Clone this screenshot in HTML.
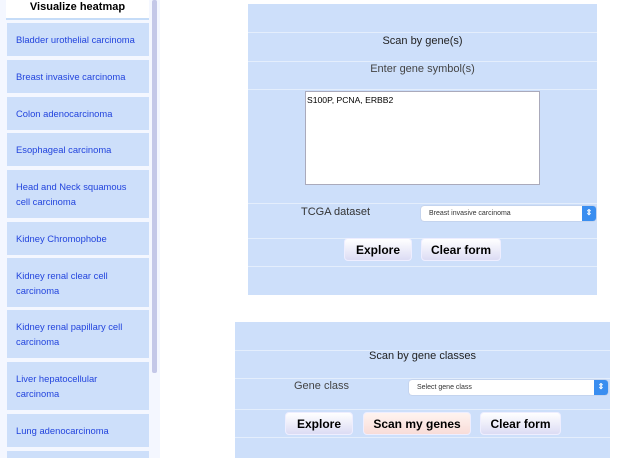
<!DOCTYPE html>
<html><head><style>
*{box-sizing:border-box;margin:0;padding:0}
html,body{width:620px;height:458px;overflow:hidden}
body{background:#fff;font-family:"Liberation Sans",Arial,sans-serif;position:relative}
.side{position:absolute;left:0;top:0;width:160px;height:458px;background:#f4f7ff;overflow:hidden}
.hd{position:absolute;left:6px;top:0;width:143px;height:20px;background:#fff;font-weight:bold;font-size:11px;text-align:center;line-height:15px;border-bottom:2px solid #c5dcf8}
.it{position:absolute;left:7px;width:142px;background:#cddffa;color:#2244dd;font-size:9.4px;line-height:15px;padding-left:9px;display:flex;align-items:center}
.sb{position:absolute;left:152px;top:0;width:5px;height:373px;background:#c4c8e8;border-radius:2px}
.p{position:absolute;background:#cddffa;overflow:hidden}
.r{position:absolute;left:0;right:0;border-top:1px solid #e4eefc}
.t{position:absolute;left:0;right:0;text-align:center;font-size:11px;color:#222}
.btn{position:absolute;height:23px;border-radius:4px;font-weight:bold;font-size:12px;text-align:center;line-height:22px;background:linear-gradient(#fff,#dcdcf4);border:1px solid #eef;color:#000}
.sel{position:absolute;height:15px;background:#fff;border-radius:3px;font-size:7px;line-height:15px;padding-left:8px;color:#333;box-shadow:0 0 1px #99a}
.sel b{position:absolute;right:0;top:0;width:14px;height:15px;background:#3a8ef0;border-radius:0 3px 3px 0;color:#fff;font-size:8px;text-align:center;line-height:14px}
</style></head><body>
<div class="side">
<div class="hd">Visualize heatmap</div>
<div class="it" style="top:23px;height:33px">Bladder urothelial carcinoma</div>
<div class="it" style="top:60px;height:33px">Breast invasive carcinoma</div>
<div class="it" style="top:97px;height:33px">Colon adenocarcinoma</div>
<div class="it" style="top:133px;height:33px">Esophageal carcinoma</div>
<div class="it" style="top:170px;height:48px">Head and Neck squamous<br>cell carcinoma</div>
<div class="it" style="top:222px;height:33px">Kidney Chromophobe</div>
<div class="it" style="top:258px;height:49px">Kidney renal clear cell<br>carcinoma</div>
<div class="it" style="top:310px;height:48px">Kidney renal papillary cell<br>carcinoma</div>
<div class="it" style="top:362px;height:48px">Liver hepatocellular<br>carcinoma</div>
<div class="it" style="top:414px;height:33px">Lung adenocarcinoma</div>
<div class="it" style="top:451px;height:20px"></div>
<div class="sb"></div>
</div>

<div class="p" style="left:248px;top:4px;width:349px;height:291px">
<div class="r" style="top:28px"></div><div class="r" style="top:57px"></div><div class="r" style="top:85px"></div><div class="r" style="top:199px"></div><div class="r" style="top:234px"></div><div class="r" style="top:262px"></div>
<div class="t" style="top:31px">Scan by gene(s)</div>
<div class="t" style="top:59px;color:#444">Enter gene symbol(s)</div>
<div style="position:absolute;left:57px;top:87px;width:235px;height:94px;background:#fff;border:1px solid #aab;font-size:8.6px;padding:3px 1px">S100P, PCNA, ERBB2</div>
<div style="position:absolute;left:53px;top:202px;font-size:11px;color:#333">TCGA dataset</div>
<div class="sel" style="left:173px;top:202px;width:175px">Breast invasive carcinoma<b>⇕</b></div>
<div class="btn" style="left:96px;top:234px;width:68px">Explore</div>
<div class="btn" style="left:173px;top:234px;width:80px">Clear form</div>
</div>

<div class="p" style="left:235px;top:322px;width:375px;height:136px">
<div class="r" style="top:28px"></div><div class="r" style="top:56px"></div><div class="r" style="top:87px"></div><div class="r" style="top:115px"></div>
<div class="t" style="top:28px">Scan by gene classes</div>
<div style="position:absolute;left:59px;top:58px;font-size:11px;color:#444">Gene class</div>
<div class="sel" style="left:174px;top:58px;width:199px">Select gene class<b>⇕</b></div>
<div class="btn" style="left:50px;top:90px;width:68px">Explore</div>
<div class="btn" style="left:128px;top:90px;width:108px;background:linear-gradient(#fff4f0,#f8dcd8)">Scan my genes</div>
<div class="btn" style="left:245px;top:90px;width:81px">Clear form</div>
</div>
</body></html>
